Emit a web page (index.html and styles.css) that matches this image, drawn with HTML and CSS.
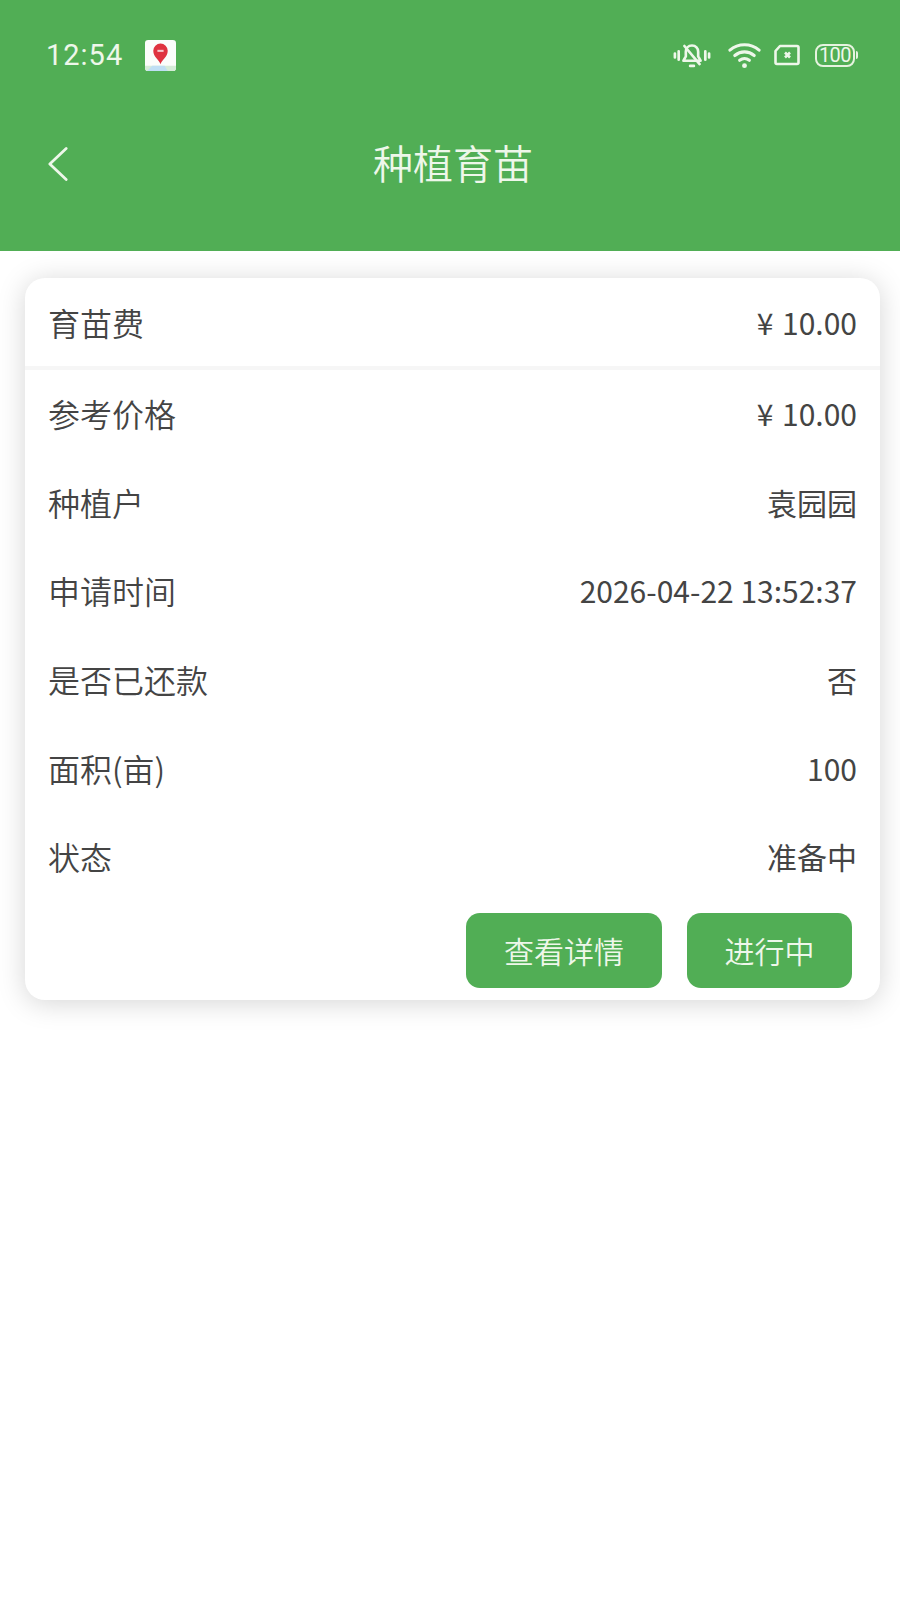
FILE: index.html
```html
<!DOCTYPE html>
<html lang="zh-CN">
<head>
  <meta charset="UTF-8">
  <meta name="viewport" content="width=device-width, initial-scale=1.0">
  <title>种植育苗</title>
  <link rel="stylesheet" href="styles.css">
</head>
<body>
  <header class="header">
    <div class="status-bar">
      <div class="status-left">
        <span class="time">12:54</span>
        <svg class="map-icon" viewBox="0 0 30 30">
          <rect width="30" height="30" rx="3" fill="#fbfdfb"/>
          <path d="M0 25h30v2a3 3 0 0 1-3 3H3a3 3 0 0 1-3-3z" fill="#d5ecd8"/>
          <path d="M2 30l5-5h12l3 5z" fill="#bfdff4"/>
          <path d="M15 23.500c-1-4-7-7-7-13a7 7 0 0 1 14 0c0 6-6 9-7 13z" fill="#df3340"/>
          <path d="M12 10.500h6" stroke="#f7c9cc" stroke-width="2"/>
        </svg>
      </div>
      <div class="status-right">
        <svg class="icon-bell" viewBox="0 0 40 28" fill="none" stroke="#eef7ea" stroke-width="2.800" stroke-linecap="round" stroke-linejoin="round">
          <path d="M2 12v4M6 9.500v9M34 9.500v9M38 12v4"/>
          <path d="M20 3.500c-4 0-6.500 3-6.500 6.500v5l-2.500 4.500h18l-2.500-4.500v-5c0-3.500-2.500-6.500-6.500-6.500z"/>
          <path d="M12 4l16 19M18 25h4"/>
        </svg>
        <svg class="icon-wifi" viewBox="0 0 34 28" fill="none" stroke="#eef7ea" stroke-width="3.200" stroke-linecap="round">
          <path d="M2 9c8.500-7.500 21.500-7.500 30 0"/>
          <path d="M7 14.500c6-5 14-5 20 0"/>
          <path d="M12 19.500c3-2.300 7-2.300 10 0"/>
          <circle cx="17" cy="25" r="2.500" fill="#eef7ea" stroke="none"/>
        </svg>
        <svg class="icon-sim" viewBox="0 0 26 22" fill="none" stroke="#eef7ea" stroke-width="2.600" stroke-linejoin="round">
          <path d="M6 2h17a1.500 1.500 0 0 1 1.500 1.500v15a1.500 1.500 0 0 1-1.500 1.500H3a1.500 1.500 0 0 1-1.500-1.500V7z"/>
          <path d="M11 8.500l5 5M16 8.500l-5 5"/>
        </svg>
        <div class="battery"><span class="battery-text">100</span></div>
      </div>
    </div>
    <div class="nav">
      <svg class="back" viewBox="0 0 22 38" fill="none" stroke="#eef7ea" stroke-width="3" stroke-linecap="round" stroke-linejoin="round">
        <path d="M20 2L2 19l18 17"/>
      </svg>
      <h1 class="title">种植育苗</h1>
    </div>
  </header>

  <main class="card">
    <div class="row row-head">
      <span class="label">育苗费</span>
      <span class="value"><span class="currency">¥</span> 10.00</span>
    </div>
    <div class="row"><span class="label">参考价格</span><span class="value"><span class="currency">¥</span> 10.00</span></div>
    <div class="row"><span class="label">种植户</span><span class="value">袁园园</span></div>
    <div class="row"><span class="label">申请时间</span><span class="value">2026-04-22 13:52:37</span></div>
    <div class="row"><span class="label">是否已还款</span><span class="value">否</span></div>
    <div class="row"><span class="label">面积(亩)</span><span class="value">100</span></div>
    <div class="row"><span class="label">状态</span><span class="value">准备中</span></div>
    <div class="actions">
      <button class="btn btn-wide" type="button">查看详情</button>
      <button class="btn btn-narrow" type="button">进行中</button>
    </div>
  </main>
</body>
</html>
```

FILE: styles.css
```css
* {
  box-sizing: border-box;
}

body {
  margin: 0;
  min-height: 100vh;
  background-color: #ffffff;
  font-family: "Noto Sans CJK SC", "Noto Sans", sans-serif;
  font-weight: 400;
  color: #444444;
}

.header {
  height: 251px;
  background-color: #51ae55;
  color: #eef7ea;
}

.status-bar {
  height: 110px;
  padding: 0 45px 0 46px;
  display: flex;
  justify-content: space-between;
  align-items: center;
}

.status-left {
  display: flex;
  align-items: center;
  gap: 22px;
}

.time {
  font-family: "Roboto", sans-serif;
  font-size: 29px;
  letter-spacing: 1px;
}

.map-icon {
  width: 31px;
  height: 31px;
}

.status-right {
  display: flex;
  align-items: center;
}

.icon-bell {
  width: 38px;
  height: 27px;
  margin-right: 17px;
}

.icon-wifi {
  width: 33px;
  height: 28px;
  margin-right: 13px;
}

.icon-sim {
  width: 26px;
  height: 22px;
  margin-right: 15px;
}

.battery {
  width: 40px;
  height: 23px;
  border: 2.5px solid #e6f3df;
  border-radius: 8px;
  display: flex;
  align-items: center;
  justify-content: center;
  position: relative;
}

.battery::after {
  content: "";
  position: absolute;
  right: -4.5px;
  top: 5px;
  width: 2px;
  height: 8px;
  background-color: #e6f3df;
  border-radius: 0 2px 2px 0;
}

.battery-text {
  font-family: "Roboto", sans-serif;
  font-size: 20px;
  line-height: 1;
  letter-spacing: -0.5px;
}

.nav {
  height: 108px;
  padding-bottom: 4px;
  padding-left: 48px;
  display: flex;
  align-items: center;
  position: relative;
}

.back {
  width: 20px;
  height: 36px;
  margin-top: 4px;
}

.title {
  position: absolute;
  left: 6px;
  right: 0;
  margin: 0;
  text-align: center;
  font-size: 40px;
  font-weight: 350;
}

.card {
  width: 855px;
  margin: 27px 0 0 25px;
  padding-bottom: 12px;
  background-color: #ffffff;
  border-radius: 20px;
  box-shadow: 0 3px 28px rgba(0, 0, 0, 0.17);
}

.row {
  height: 88.6px;
  padding: 0 23px 0 23px;
  display: flex;
  justify-content: space-between;
  align-items: center;
  font-size: 32px;
  font-weight: 350;
}

.row:nth-child(2) {
  margin-top: -1px;
}

.row-head {
  height: 92px;
  padding-top: 0;
  border-bottom: 4px solid #f6f6f6;
}

.value {
  font-size: 30px;
  font-weight: 400;
}

.currency {
  margin-right: 2px;
}

.actions {
  margin-top: 12px;
  padding-right: 28px;
  display: flex;
  justify-content: flex-end;
  gap: 25px;
}

.btn {
  height: 75px;
  border: none;
  border-radius: 14px;
  background-color: #51ae55;
  color: #eef7ea;
  font-family: inherit;
  font-weight: 350;
  font-size: 30px;
  padding: 0;
}

.btn-wide {
  width: 196px;
}

.btn-narrow {
  width: 165px;
}
```
